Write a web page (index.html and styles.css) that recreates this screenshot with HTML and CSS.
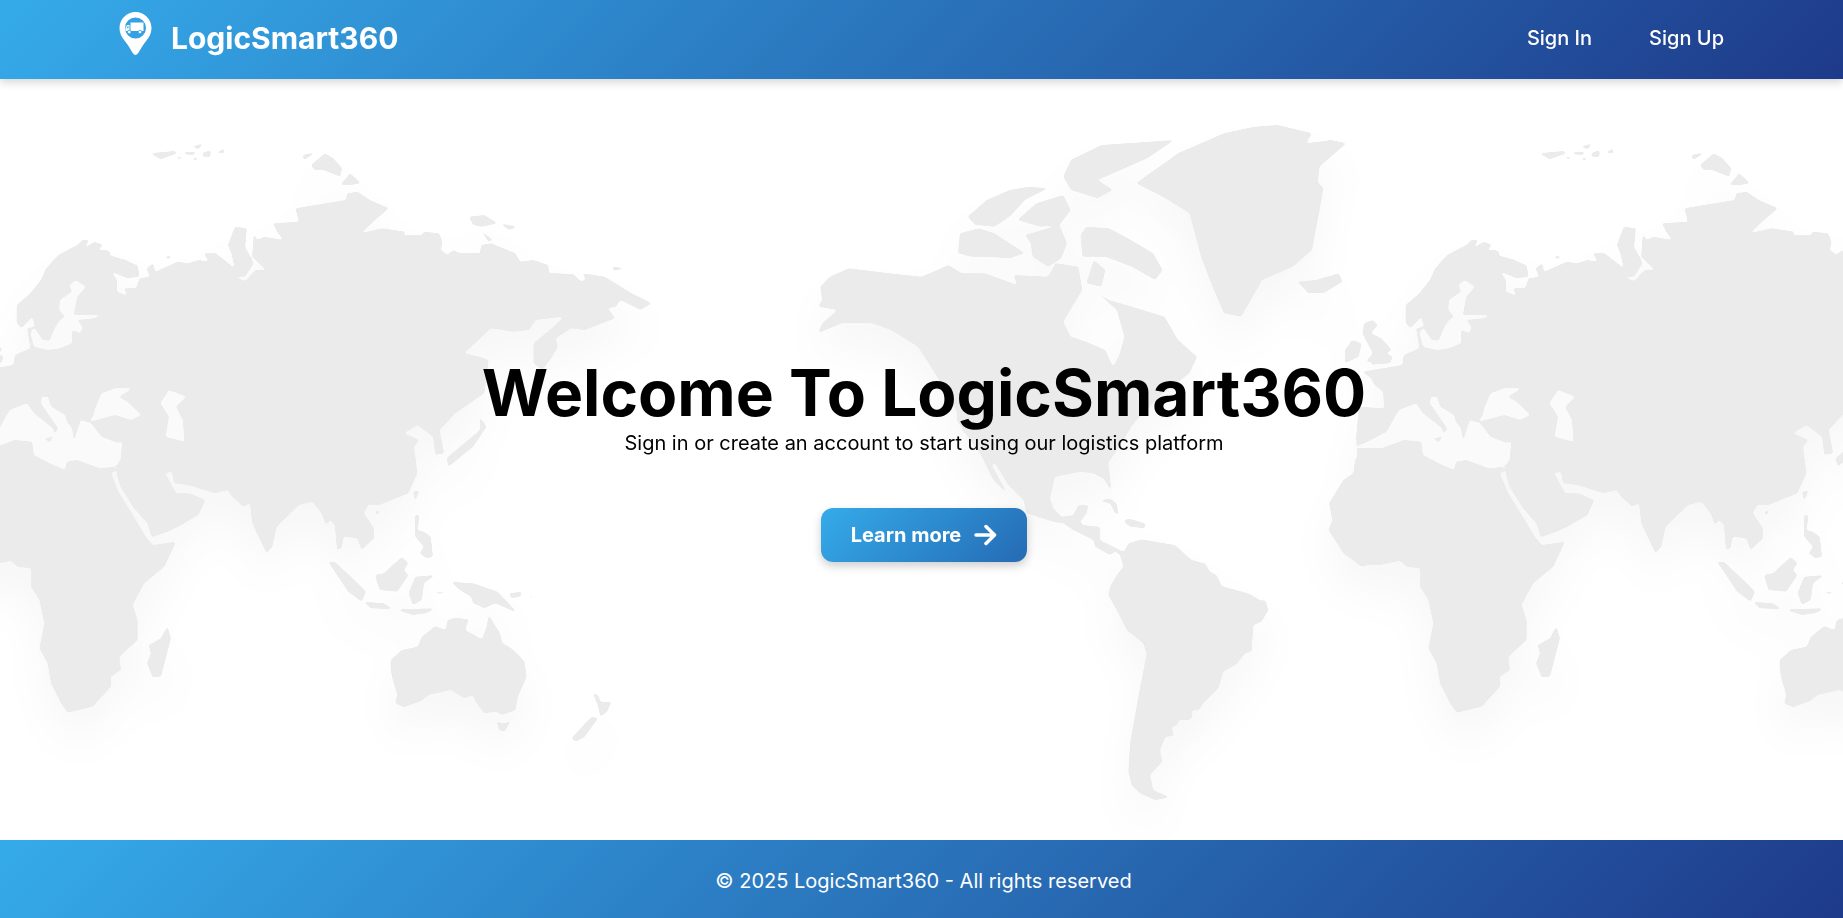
FILE: index.html
```html
<!DOCTYPE html>
<html>
<head>
    <meta charset="utf-8">
    <title>LogicSmart360</title>
    <link rel="stylesheet" href="styles.css">
</head>
<body>
    <header class="topbar">
        <a class="brand" href="#">
            <svg class="brand-pin" viewBox="0 0 32 43">
                <path fill="#fff" fill-rule="evenodd" d="M16 0C7.200 0 0 7.200 0 16c0 8 5 12 9 18 3 5 5 9 7 9s4-4 7-9c4-6 9-10 9-18C32 7.200 24.800 0 16 0zm0 5.500a10.500 10.500 0 1 1 0 21 10.500 10.500 0 0 1 0-21z"/>
                <path fill="#fff" d="M11 10.500h13v8.500H11z"/>
                <path fill="#fff" fill-rule="evenodd" d="M10 13H7.500L6 16v3h4zM9 14.200v2H7.300l.9-2z"/>
                <circle cx="9.800" cy="20" r="1.800" fill="#fff" stroke="#31a2e3" stroke-width=".8"/>
                <circle cx="20.500" cy="20" r="1.800" fill="#fff" stroke="#31a2e3" stroke-width=".8"/>
            </svg>
            <span class="brand-name">LogicSmart360</span>
        </a>
        <nav class="nav">
            <a href="#">Sign In</a>
            <a href="#">Sign Up</a>
        </nav>
    </header>

    <main class="hero">
        <svg class="map" viewBox="0 79 1843 761" preserveAspectRatio="none">
            <defs>
                <!-- rounds off the corners of the traced coastlines -->
                <filter id="smooth" filterUnits="userSpaceOnUse" x="-100" y="0" width="2100" height="900" color-interpolation-filters="sRGB">
                    <feGaussianBlur stdDeviation="1.1"/>
                    <feComponentTransfer>
                        <feFuncA type="linear" slope="5" intercept="-2"/>
                    </feComponentTransfer>
                </filter>
                <g id="land">
                    <!-- europe + north asia -->
                    <g transform="translate(-89,120) scale(.3463,.3333)">
                        <polygon points="305,610 305,555 345,520 375,480 390,445 425,405 480,375 495,360 515,360 500,385 530,365 555,375 540,390 565,390 580,400 570,405 620,420 655,437 660,470 625,475 578,455 595,480 595,515 625,527 615,505 650,505 660,475 690,470 680,445 700,430 705,455 770,425 800,430 830,420 860,425 845,400 880,400 935,445 925,400 915,375 935,320 970,325 965,380 990,430 965,470 935,470 965,483 995,450 1025,450 1000,425 985,410 990,340 1000,360 1020,350 1075,360 1060,340 1045,310 1120,305 1110,265 1255,240 1260,220 1290,215 1325,240 1380,265 1330,310 1300,340 1360,325 1430,335 1420,345 1475,345 1480,335 1525,340 1535,365 1530,390 1550,405 1568,395 1568,850 1400,930 1400,1030 620,1030 600,1040 400,1040 300,1010 165,1010 162,950 170,860 243,865 240,815 215,795 205,775 180,755 265,740 295,735 300,705 345,685 335,625 358,620 350,590 320,625"/>
                        <polygon points="185,610 210,600 225,615 205,640 235,655 265,690 250,700 268,710 260,730 195,735 215,725 190,725 210,700 195,670 180,640"/>
                        <polygon points="150,660 178,670 170,710 130,730 130,690"/>
                        <polygon points="690,100 760,93 770,100 720,118 700,105"/>
                        <polygon points="790,95 825,95 815,105 790,103"/>
                        <polygon points="810,80 845,70 830,88"/>
                        <polygon points="840,100 865,90 865,110 845,112"/>
                        <polygon points="880,100 905,85 905,100"/>
                        <polygon points="760,110 790,110 775,118"/>
                        <polygon points="810,115 835,112 820,122"/>
                        <polygon points="1130,105 1170,97 1135,120"/>
                        <polygon points="1155,135 1195,100 1220,115 1245,145 1240,170 1190,150 1165,150"/>
                        <polygon points="1240,195 1268,160 1300,190 1270,195"/>
                        <polygon points="730,412 755,405 745,418"/>
                    </g>
                    <!-- east asia -->
                    <g transform="translate(0,100) scale(.4464,.3333)">
                        <polygon points="900,420 1000,467 1015,450 1030,460 1075,460 1078,435 1100,430 1155,460 1165,485 1195,480 1228,495 1230,518 1285,523 1300,543 1312,540 1305,520 1355,530 1415,580 1460,610 1435,630 1390,600 1380,620 1362,625 1378,655 1310,690 1280,685 1245,715 1250,740 1235,775 1215,810 1195,790 1195,730 1240,680 1262,650 1200,660 1185,690 1150,695 1100,685 1040,760 1075,770 1095,780 1085,880 1020,940 985,990 995,1060 975,1065 970,1010 935,975 905,1000 940,1020 915,1060 935,1100 925,1080 440,1080 440,800"/>
                        <polygon points="1050,350 1085,345 1115,370 1080,380 1060,375"/>
                        <polygon points="1120,370 1160,380 1140,390"/>
                        <polygon points="1075,390 1105,420 1095,425"/>
                        <polygon points="1370,500 1405,505 1375,512"/>
                        <polygon points="1445,645 1470,655 1450,652"/>
                        <polygon points="1075,950 1090,980 1060,1040 1005,1100 1000,1075 1040,1030 1075,990"/>
                    </g>
                    <!-- south asia, islands, australia -->
                    <g transform="translate(0,450) scale(.4464,.3333)">
                        <polygon points="925,-40 935,70 915,130 850,165 825,165 815,190 838,235 838,265 810,300 800,265 770,260 765,295 755,300 750,225 740,210 730,225 720,190 700,155 670,165 620,230 610,290 597,310 565,220 560,160 545,170 520,140 510,120 480,130 435,110 420,105 390,100 385,65 370,70 395,130 425,130 460,150 445,195 425,210 400,230 375,245 340,262 330,220 300,175 270,110 262,75 262,-40"/>
                        <polygon points="925,125 940,120 930,155"/>
                        <polygon points="840,185 852,180 845,198"/>
                        <polygon points="930,195 940,195 935,240 950,245 965,260 970,320 955,325 940,310 950,290 930,260"/>
                        <polygon points="860,370 900,320 915,340 905,360 915,375 890,425 850,420 840,375"/>
                        <polygon points="735,335 750,335 790,385 820,425 810,455 780,425"/>
                        <polygon points="815,455 860,460 880,478 830,475"/>
                        <polygon points="930,380 975,375 950,400 945,450 925,465 915,430"/>
                        <polygon points="1010,395 1060,400 1115,425 1160,490 1110,460 1085,475 1060,460 1055,440 1030,420"/>
                        <polygon points="1140,430 1170,425 1165,440 1145,445"/>
                        <polygon points="1185,430 1195,445 1188,445"/>
                        <polygon points="895,478 975,475 955,490 925,495 895,482"/>
                        <polygon points="965,425 1010,425 985,432"/>
                        <polygon points="875,630 900,600 935,590 945,560 975,528 998,540 1003,510 1020,503 1050,508 1042,540 1080,568 1090,530 1095,495 1120,550 1125,578 1145,595 1158,610 1175,635 1180,680 1160,740 1155,780 1125,795 1110,785 1085,790 1065,755 1060,735 1040,745 1010,720 960,735 945,752 905,772 885,760 890,735 880,690 875,660"/>
                        <polygon points="1112,815 1130,820 1145,812 1130,845 1118,840"/>
                        <polygon points="1280,865 1325,800 1340,805 1310,860 1290,875"/>
                        <polygon points="1328,728 1340,735 1345,755 1370,755 1360,785 1345,800 1340,770"/>
                    </g>
                    <!-- africa -->
                    <g transform="translate(-89,440) scale(.3333)">
                        <polygon points="165,60 200,15 240,25 290,0 365,0 370,40 415,60 460,90 475,65 560,85 600,80 620,90 600,100 625,160 660,215 705,290 725,315 795,305 760,380 700,430 665,495 680,540 680,600 625,650 630,690 600,710 600,740 545,800 470,818 450,790 420,730 410,670 385,625 400,550 385,480 360,440 360,385 320,380 300,362 240,375 205,375 185,380 130,340 85,270 97,240 87,190 130,120 160,100"/>
                        <polygon points="770,560 780,595 750,710 725,712 708,670 720,640 713,615 750,595 762,570"/>
                    </g>
                    <!-- north america, greenland, arctic -->
                    <g transform="translate(780,110) scale(.3827,.3333)">
                        <polygon points="105,530 130,500 180,475 285,490 370,500 440,465 475,490 535,490 620,525 610,495 700,500 720,460 780,470 790,540 740,635 760,680 800,695 850,720 870,770 885,740 900,680 880,600 820,540 860,570 920,590 1005,620 1040,690 1090,740 1070,790 1000,850 940,920 900,970 480,970 470,920 400,780 360,710 290,660 240,640 160,640 100,670 110,640 150,600 100,590 110,570"/>
                        <polygon points="930,220 1040,130 1160,70 1240,50 1300,45 1390,70 1375,100 1440,90 1480,100 1410,170 1405,215 1420,235 1410,300 1390,420 1340,470 1260,510 1205,620 1160,610 1130,530 1100,440 1070,310 1000,260"/>
                        <polygon points="1350,515 1400,510 1460,490 1470,515 1420,550 1380,550 1365,530"/>
                        <polygon points="760,150 840,105 1030,90 960,145 880,185 830,210 870,240 830,265 760,240 740,200"/>
                        <polygon points="490,320 540,270 600,240 650,230 700,235 640,270 600,320 560,350 510,345"/>
                        <polygon points="620,330 670,280 740,255 760,300 730,345 680,350"/>
                        <polygon points="465,430 470,370 520,355 560,370 640,430 600,445 540,440 500,440"/>
                        <polygon points="640,375 730,345 750,400 735,445 700,470 660,440 655,400"/>
                        <polygon points="785,375 800,350 860,355 925,395 975,430 1000,480 980,510 920,470 850,440 790,440"/>
                        <polygon points="820,450 850,480 840,530 800,520"/>
                    </g>
                    <!-- mexico, florida, central america -->
                    <g transform="translate(960,420) scale(.3333)">
                        <polygon points="-10,0 30,60 60,100 100,180 145,225 95,135 105,130 145,195 190,240 200,280 280,305 310,310 340,330 400,360 405,380 450,405 465,395 490,395 420,360 420,320 370,315 360,305 380,280 385,255 355,255 340,285 305,290 280,265 270,235 285,170 360,155 400,160 430,175 455,215 445,130 490,60 525,0 530,-60 -10,-60"/>
                    </g>
                    <!-- south america, caribbean -->
                    <g transform="translate(1000,480) scale(.3333)">
                        <polygon points="372,215 385,190 425,178 525,195 575,240 615,250 630,275 650,285 665,318 745,340 780,360 797,362 805,390 785,425 760,435 755,515 735,520 710,552 670,575 655,625 610,670 595,692 575,690 578,710 565,722 540,718 530,735 515,742 522,768 497,770 480,810 487,845 450,885 460,930 510,952 465,960 420,940 395,915 385,875 390,790 415,650 440,520 430,490 380,450 350,390 325,345 330,320 350,285 370,260 360,225 345,212"/>
                        <polygon points="295,62 330,55 350,70 355,100 380,110 345,100 330,70"/>
                        <polygon points="328,118 340,120 335,125"/>
                        <polygon points="385,115 435,130 435,145 390,140 370,125"/>
                        <polygon points="445,150 470,158 450,157"/>
                    </g>
                </g>
                <g id="seas" transform="translate(-89,120) scale(.3463,.3333)">
                    <polygon points="355,680 345,640 355,622 380,660 400,662 415,625 430,600 445,590 428,570 430,540 465,515 458,495 475,480 505,500 480,530 470,585 550,585 530,595 480,600 495,620 490,640 465,630 465,670 430,685 395,690"/>
                    <polygon points="150,985 195,965 250,935 285,870 335,850 355,880 410,925 415,945 395,955 380,950 400,968 425,925 375,850 378,830 395,830 405,860 445,885 450,905 465,925 470,965 490,900 520,910 550,950 595,968 610,965 605,1020 590,1040 545,1045 480,1020 450,1025 445,1050 400,1030 355,1005 350,965 300,960 235,985 195,985"/>
                    <polygon points="530,870 550,820 590,805 640,805 600,830 625,845 665,885 635,900 590,885 515,905 528,885"/>
                    <polygon points="720,850 745,810 795,830 765,860 785,900 790,965 735,950 745,890"/>
                </g>
            </defs>
            <g class="map-land">
                <g filter="url(#smooth)">
                    <use href="#land"/>
                    <use href="#land" x="1389"/>
                </g>
            </g>
            <g class="map-seas" filter="url(#smooth)">
                <use href="#seas"/>
                <use href="#seas" x="1389"/>
            </g>
        </svg>

        <div class="hero-text">
            <h1>Welcome To LogicSmart360</h1>
            <p>Sign in or create an account to start using our logistics platform</p>
            <a class="learn-btn" href="#">
                Learn more
                <svg class="learn-arrow" viewBox="0 0 24 24"><path d="M3 12h18M13 3.500l8.500 8.500-8.500 8.500"/></svg>
            </a>
        </div>
    </main>

    <footer class="bottombar">© 2025 LogicSmart360 - All rights reserved</footer>
</body>
</html>
```

FILE: styles.css
```css
body {
    display: flex;
    flex-direction: column;
    height: 100vh;
    margin: 0;
    overflow: hidden;
    font-family: Inter, "Noto Sans", sans-serif;
    background-color: #fff;
    color: #000;
}

a {
    color: inherit;
    text-decoration: none;
}

.topbar {
    position: relative;
    z-index: 2;
    display: flex;
    flex: none;
    box-sizing: border-box;
    align-items: center;
    justify-content: space-between;
    height: 79px;
    padding: 0 119px 4px;
    color: #fff;
    background: linear-gradient(135deg, #35abea, #1e3a8a);
    box-shadow: 0 4px 8px rgba(0, 0, 0, 0.15);
}

.brand {
    display: flex;
    align-items: center;
    gap: 19px;
}

.brand-pin {
    width: 33px;
    height: 43px;
    margin-top: -8px;
}

.brand-name {
    font-size: 30px;
    font-weight: 700;
}

.nav {
    display: flex;
    gap: 57px;
    font-size: 20px;
    font-weight: 500;
}

.hero {
    position: relative;
    display: flex;
    flex: 1;
    align-items: center;
    justify-content: center;
    padding-left: 5px;
    overflow: hidden;
}

.map {
    position: absolute;
    top: 0;
    left: 0;
    width: 1843px;
    height: 761px;
}

.map-land {
    fill: #ebebeb;
    filter: drop-shadow(0 28px 20px rgba(0, 0, 0, 0.03));
}

.map-seas {
    fill: #fafafa;
}

.hero-text {
    position: relative;
    display: flex;
    flex-direction: column;
    align-items: center;
}

.hero-text h1 {
    margin: 0;
    font-size: 64px;
    font-weight: 700;
    line-height: 70px;
}

.hero-text p {
    margin: 3px 0 0;
    font-size: 20px;
    line-height: 24px;
}

.learn-btn {
    display: flex;
    align-items: center;
    gap: 12px;
    height: 54px;
    margin-top: 53px;
    padding: 0 30px;
    font-size: 20px;
    font-weight: 700;
    color: #fff;
    border-radius: 12px;
    background: linear-gradient(135deg, #35abea, #256bb4);
    box-shadow: 0 4px 10px rgba(0, 0, 0, 0.2);
}

.learn-arrow {
    width: 24px;
    height: 24px;
    fill: none;
    stroke: #fff;
    stroke-width: 3.500;
    stroke-linecap: round;
    stroke-linejoin: round;
}

.bottombar {
    flex: none;
    box-sizing: border-box;
    height: 78px;
    padding: 4px 0 0 4px;
    font-size: 20px;
    line-height: 74px;
    text-align: center;
    color: #fff;
    background: linear-gradient(135deg, #35abea, #1e3a8a);
}
```
